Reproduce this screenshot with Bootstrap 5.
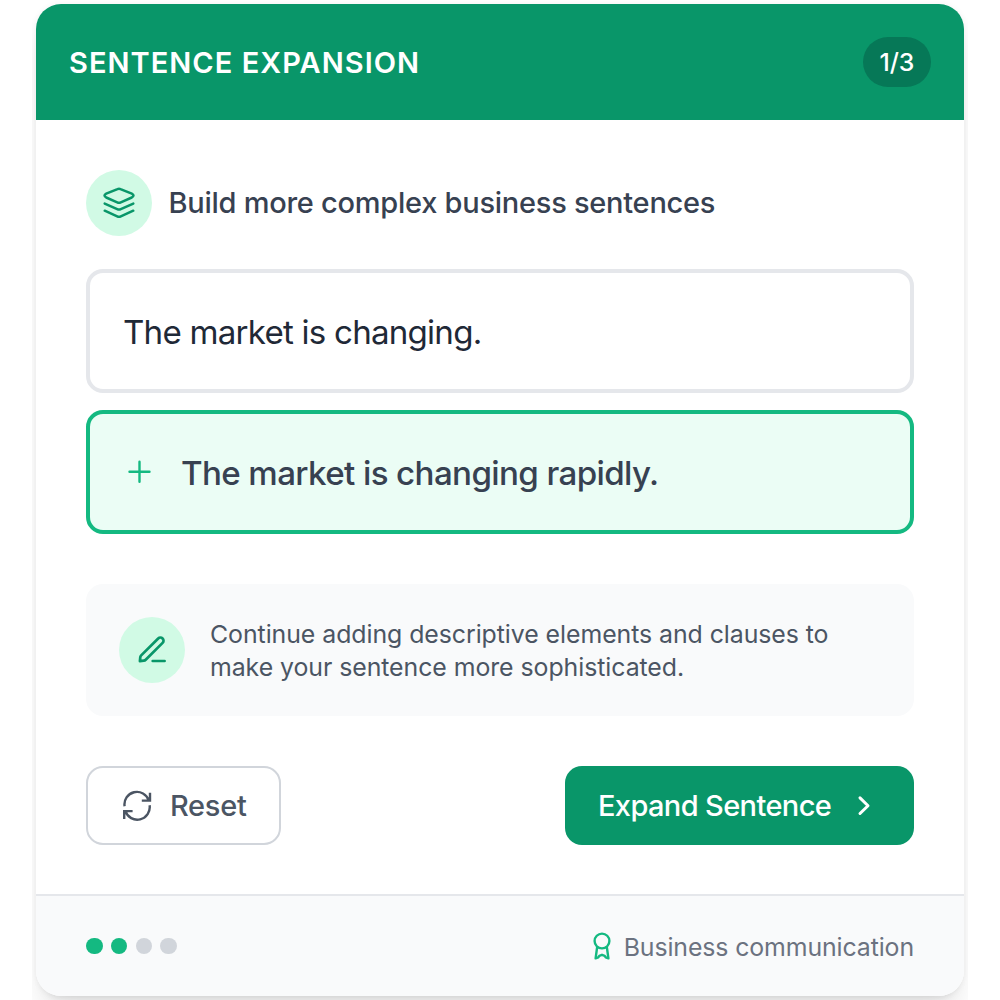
<!DOCTYPE html>
<html lang="en">
<head>
<meta charset="utf-8">
<meta name="viewport" content="width=device-width, initial-scale=1">
<title>Sentence Expansion</title>
<link href="https://cdn.jsdelivr.net/npm/bootstrap@5.3.0/dist/css/bootstrap.min.css" rel="stylesheet">
<style>
body{font-family:Inter,"Liberation Sans",sans-serif;background:#fff;width:1000px;height:1000px;overflow:hidden}
.stage{width:936px;height:1000px;padding:4px 4px 0}
.panel{height:992px;border-radius:25px;box-shadow:0 21px 31px -6px rgba(0,0,0,.1),0 8px 12px -8px rgba(0,0,0,.1),0 0 6px rgba(0,0,0,.05)}
.panel-top{height:116px;padding:0 33.5px 0 33px;background:#099669;border-radius:25px 25px 0 0}
.t-title{font-size:29px;font-weight:600;letter-spacing:1.03px;line-height:1}
.count{width:67.3px;height:50px;background:#067857;font-size:24.86px;font-weight:500;letter-spacing:-.2px;padding-top:2px}
.panel-main{height:774px;padding:50px 50px 0}
.lead-row{gap:17px;margin-bottom:33px}
.disc{width:66px;height:66px;background:#d1fae5;color:#099669}
.t-lead{font-size:29px;font-weight:500;color:#374151;line-height:1;letter-spacing:-.26px;margin:-1px 0 0 -.5px}
.sentence{height:124px;border:4px solid #e5e7eb;border-radius:17px;padding:3px 33px 0;font-size:33.14px;color:#1f2937;line-height:1;letter-spacing:-.78px}
.sentence.added{border-color:#14b981;background:#ebfdf5;color:#374151;font-weight:500;margin-top:17px;letter-spacing:-.62px}
.plus{margin:-3px 25px 0 1px}
.hint{height:132px;margin-top:50px;border-radius:17px;background:#f9fafb;padding:0 33px;gap:25px;font-size:24.86px;line-height:33px;color:#4b5563;letter-spacing:-.06px}
.t-hint{padding-top:2px}
.actions{margin-top:50px}
.act{height:79px;border-radius:17px;font-size:29px;font-weight:500;line-height:1}
.act-reset{width:195px;border:2px solid #d1d5db;color:#4b5563;background:#fff;padding:0 0 0 33px;gap:17px;letter-spacing:-.3px}
.act-go{width:349px;border:0;background:#099669;color:#fff;padding:0 38px 0 33px;letter-spacing:-.62px}
.panel-foot{height:102px;border-top:2px solid #e5e7eb;background:#f9fafb;padding:0 50px;border-radius:0 0 25px 25px}
.dots{gap:8.28px}
.dot{width:16.57px;height:16.57px;background:#d1d5db}
.dot.on{background:#14b981}
.t-foot{font-size:24.86px;color:#6b7280;line-height:1;letter-spacing:-.11px;padding-top:2px}
.award{margin-right:9px}
svg{flex:none;fill:none;stroke:currentColor;stroke-linecap:round;stroke-linejoin:round}
.green{color:#14b981}
</style>
</head>
<body>
<div class="stage mx-auto overflow-hidden">
<div class="panel bg-white d-flex flex-column">
  <header class="panel-top d-flex align-items-center justify-content-between text-white">
    <div class="t-title">SENTENCE EXPANSION</div>
    <div class="count rounded-pill d-flex align-items-center justify-content-center">1/3</div>
  </header>
  <main class="panel-main">
    <div class="lead-row d-flex align-items-center">
      <div class="disc rounded-circle d-flex align-items-center justify-content-center">
        <svg width="40" height="40" viewBox="0 0 40 40" stroke-width="2.5"><path d="M18.500 6.100Q20 5.400 21.500 6.100L32.800 10.700Q36.200 12.600 32.800 14.500L21.800 19.300Q20 20.100 18.200 19.300L7.200 14.500Q3.800 12.600 7.200 10.700ZM5.700 20.600L18.200 26.200Q20 27 21.800 26.200L34.300 20.600M5.700 27.700L18.200 33.400Q20 34.200 21.800 33.400L34.300 27.700"/></svg>
      </div>
      <div class="t-lead">Build more complex business sentences</div>
    </div>
    <div class="sentence d-flex align-items-center"><span>The market is changing.</span></div>
    <div class="sentence added d-flex align-items-center">
      <svg class="green plus" width="32" height="32" viewBox="0 0 32 32" stroke-width="2.4"><path d="M15.500 5.700V25.700M5.500 15.700H25.500"/></svg>
      <span>The market is changing rapidly.</span>
    </div>
    <div class="hint d-flex align-items-center">
      <div class="disc rounded-circle d-flex align-items-center justify-content-center flex-shrink-0">
        <svg width="40" height="40" viewBox="0 0 40 40" stroke-width="2.7"><path d="M7.900 31.100L8.300 27.200Q8.400 26.200 9.200 25.400L26.200 8.500A3.100 3.100 0 0 1 30.600 12.900L13.700 29.800Q12.900 30.600 11.800 30.700ZM20.700 31H32.600"/></svg>
      </div>
      <div class="t-hint">Continue adding descriptive elements and clauses to<br>make your sentence more sophisticated.</div>
    </div>
    <div class="actions d-flex justify-content-between">
      <button type="button" class="btn act act-reset d-flex align-items-center">
        <svg width="32" height="32" viewBox="0 0 32 32" stroke-width="2.4"><g stroke-linecap="butt" stroke-linejoin="miter"><path d="M3.600 16.300A12.500 12.500 0 0 1 27.800 10.400M29 2.800V10.600H20.800M28.600 15.300A12.500 12.500 0 0 1 4.400 21.200M3.200 28.900V21.100H11.600"/></g></svg>
        <span>Reset</span>
      </button>
      <button type="button" class="btn act act-go d-flex align-items-center justify-content-between">
        <span>Expand Sentence</span>
        <svg width="24" height="24" viewBox="0 0 24 24" stroke-width="3"><path d="M8 3.900L16 11.700L8 19.500"/></svg>
      </button>
    </div>
  </main>
  <footer class="panel-foot d-flex align-items-center justify-content-between">
    <div class="dots d-flex">
      <span class="dot on rounded-circle"></span><span class="dot on rounded-circle"></span><span class="dot rounded-circle"></span><span class="dot rounded-circle"></span>
    </div>
    <div class="d-flex align-items-center">
      <svg class="green award" width="26" height="30" viewBox="0 0 26 30" stroke-width="2.400"><circle cx="13" cy="10" r="7.400"/><path d="M8.100 16.500L6.600 27.300L9.300 26.400L10.300 24.800L13 23.800L15.700 24.800L16.700 26.400L19.400 27.300L17.900 16.500"/></svg>
      <span class="t-foot">Business communication</span>
    </div>
  </footer>
</div>
</div>
<script src="https://cdn.jsdelivr.net/npm/bootstrap@5.3.0/dist/js/bootstrap.bundle.min.js"></script>
</body>
</html>
